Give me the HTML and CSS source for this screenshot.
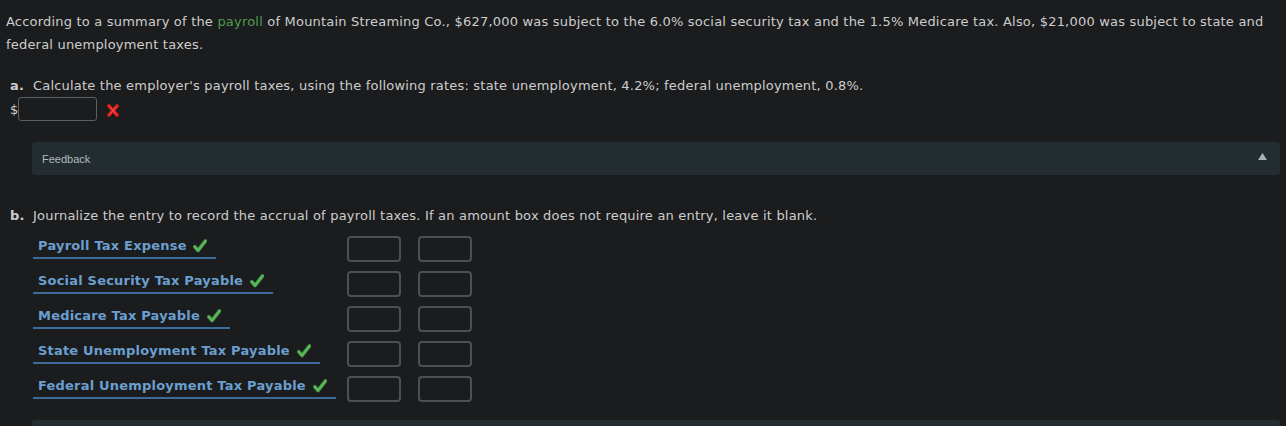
FILE: index.html
```html
<!DOCTYPE html>
<html>
<head>
<meta charset="utf-8">
<link rel="stylesheet" href="styles.css">
</head>
<body>
<div class="page">
  <p class="intro">According to a summary of the <span class="term">payroll</span> of Mountain Streaming Co., $627,000 was subject to the 6.0% social security tax and the 1.5% Medicare tax. Also, $21,000 was subject to state and federal unemployment taxes.</p>

  <div class="part">
    <div class="part-head"><span class="part-label">a.</span><span>Calculate the employer's payroll taxes, using the following rates: state unemployment, 4.2%; federal unemployment, 0.8%.</span></div>
    <div class="answer-row">
      <span class="dollar">$</span>
      <span class="text-input"></span>
      <svg class="wrong" width="12" height="13" viewBox="0 0 12 13"><path d="M2 2 L10 11 M10 2 L2 11" stroke="#d81e1e" stroke-width="3.4" stroke-linecap="square"/><path d="M2.5 2.5 L9.5 10.5 M9.5 2.5 L2.5 10.5" stroke="#ff5555" stroke-width="1"/></svg>
    </div>
  </div>

  <div class="feedback">
    <span class="feedback-title">Feedback</span>
    <svg class="caret" width="9" height="7" viewBox="0 0 9 7"><path d="M4.5 0 L9 7 L0 7 Z" fill="#a9b0b4"/></svg>
  </div>

  <div class="part part-b">
    <div class="part-head"><span class="part-label">b.</span><span>Journalize the entry to record the accrual of payroll taxes. If an amount box does not require an entry, leave it blank.</span></div>
    <div class="journal">
      <div class="jrow">
        <div class="acct-cell"><span class="acct">Payroll Tax Expense <svg class="check" width="14" height="14" viewBox="0 0 14 14"><path d="M1.8 7.8 L5 11.5 L12.5 2" fill="none" stroke="#3a7a3a" stroke-width="4" stroke-linecap="round" stroke-linejoin="round"/><path d="M1.8 7.8 L5 11.5 L12.5 2" fill="none" stroke="#5cb85c" stroke-width="2.4" stroke-linecap="round" stroke-linejoin="round"/></svg></span></div>
        <span class="amt"></span><span class="amt"></span>
      </div>
      <div class="jrow">
        <div class="acct-cell"><span class="acct">Social Security Tax Payable <svg class="check" width="14" height="14" viewBox="0 0 14 14"><path d="M1.8 7.8 L5 11.5 L12.5 2" fill="none" stroke="#3a7a3a" stroke-width="4" stroke-linecap="round" stroke-linejoin="round"/><path d="M1.8 7.8 L5 11.5 L12.5 2" fill="none" stroke="#5cb85c" stroke-width="2.4" stroke-linecap="round" stroke-linejoin="round"/></svg></span></div>
        <span class="amt"></span><span class="amt"></span>
      </div>
      <div class="jrow">
        <div class="acct-cell"><span class="acct">Medicare Tax Payable <svg class="check" width="14" height="14" viewBox="0 0 14 14"><path d="M1.8 7.8 L5 11.5 L12.5 2" fill="none" stroke="#3a7a3a" stroke-width="4" stroke-linecap="round" stroke-linejoin="round"/><path d="M1.8 7.8 L5 11.5 L12.5 2" fill="none" stroke="#5cb85c" stroke-width="2.4" stroke-linecap="round" stroke-linejoin="round"/></svg></span></div>
        <span class="amt"></span><span class="amt"></span>
      </div>
      <div class="jrow">
        <div class="acct-cell"><span class="acct">State Unemployment Tax Payable <svg class="check" width="14" height="14" viewBox="0 0 14 14"><path d="M1.8 7.8 L5 11.5 L12.5 2" fill="none" stroke="#3a7a3a" stroke-width="4" stroke-linecap="round" stroke-linejoin="round"/><path d="M1.8 7.8 L5 11.5 L12.5 2" fill="none" stroke="#5cb85c" stroke-width="2.4" stroke-linecap="round" stroke-linejoin="round"/></svg></span></div>
        <span class="amt"></span><span class="amt"></span>
      </div>
      <div class="jrow">
        <div class="acct-cell"><span class="acct">Federal Unemployment Tax Payable <svg class="check" width="14" height="14" viewBox="0 0 14 14"><path d="M1.8 7.8 L5 11.5 L12.5 2" fill="none" stroke="#3a7a3a" stroke-width="4" stroke-linecap="round" stroke-linejoin="round"/><path d="M1.8 7.8 L5 11.5 L12.5 2" fill="none" stroke="#5cb85c" stroke-width="2.4" stroke-linecap="round" stroke-linejoin="round"/></svg></span></div>
        <span class="amt"></span><span class="amt"></span>
      </div>
    </div>
  </div>

  <div class="next-bar"></div>
</div>
</body>
</html>
```

FILE: styles.css
```css
html, body {
  margin: 0;
  padding: 0;
  background: #1b1c1e;
}
body {
  font-family: "DejaVu Sans", Verdana, sans-serif;
  font-size: 13px;
  letter-spacing: 0.2px;
  color: #cdcdcd;
}
.page {
  padding: 10px 6px 0 6px;
  height: 416px;
  overflow: hidden;
}
.intro {
  margin: 0;
  line-height: 23px;
  padding-right: 4px;
}
.term {
  color: #4f9a4f;
}
.part {
  margin-top: 18px;
}
.part-head {
  display: flex;
  line-height: 23px;
  padding-left: 4px;
}
.part-label {
  font-weight: bold;
  width: 23px;
  flex: none;
}
.answer-row {
  display: flex;
  align-items: center;
  padding-left: 4px;
  margin-top: 0;
}
.dollar {
  width: 8px;
}
.text-input {
  display: block;
  width: 77px;
  height: 22px;
  border: 1px solid #5d5f62;
  border-radius: 3px;
  background: #1b1c1e;
}
.wrong {
  margin-left: 10px;
  margin-top: 2px;
}
.feedback {
  margin: 21px 0 0 26px;
  height: 33px;
  background: #222c31;
  border-radius: 3px;
  display: flex;
  align-items: center;
  justify-content: space-between;
  padding: 0 13px 0 10px;
}
.feedback-title {
  font-family: "Liberation Sans", Arial, sans-serif;
  font-size: 11px;
  letter-spacing: 0;
  color: #b4b9bc;
}
.caret {
  margin-top: -5px;
}
.part-b {
  margin-top: 29px;
}
.journal {
  margin-top: 7px;
  padding-left: 27px;
}
.jrow {
  display: flex;
  align-items: flex-start;
  height: 35px;
}
.acct-cell {
  width: 314px;
  flex: none;
  padding-top: 3px;
}
.acct {
  display: inline-block;
  font-weight: bold;
  color: #6a9fd0;
  line-height: 17px;
  padding: 0 9px 3px 5px;
  border-bottom: 2px solid #3b6b98;
}
.check {
  vertical-align: -3px;
  margin-left: 2px;
}
.amt {
  display: block;
  width: 50px;
  height: 22px;
  margin-top: 2px;
  margin-right: 17px;
  border: 2px solid #4d4f52;
  border-radius: 4px;
}
.next-bar {
  margin: 11px 0 0 26px;
  height: 20px;
  background: #222c31;
  border-radius: 3px 3px 0 0;
}
```
